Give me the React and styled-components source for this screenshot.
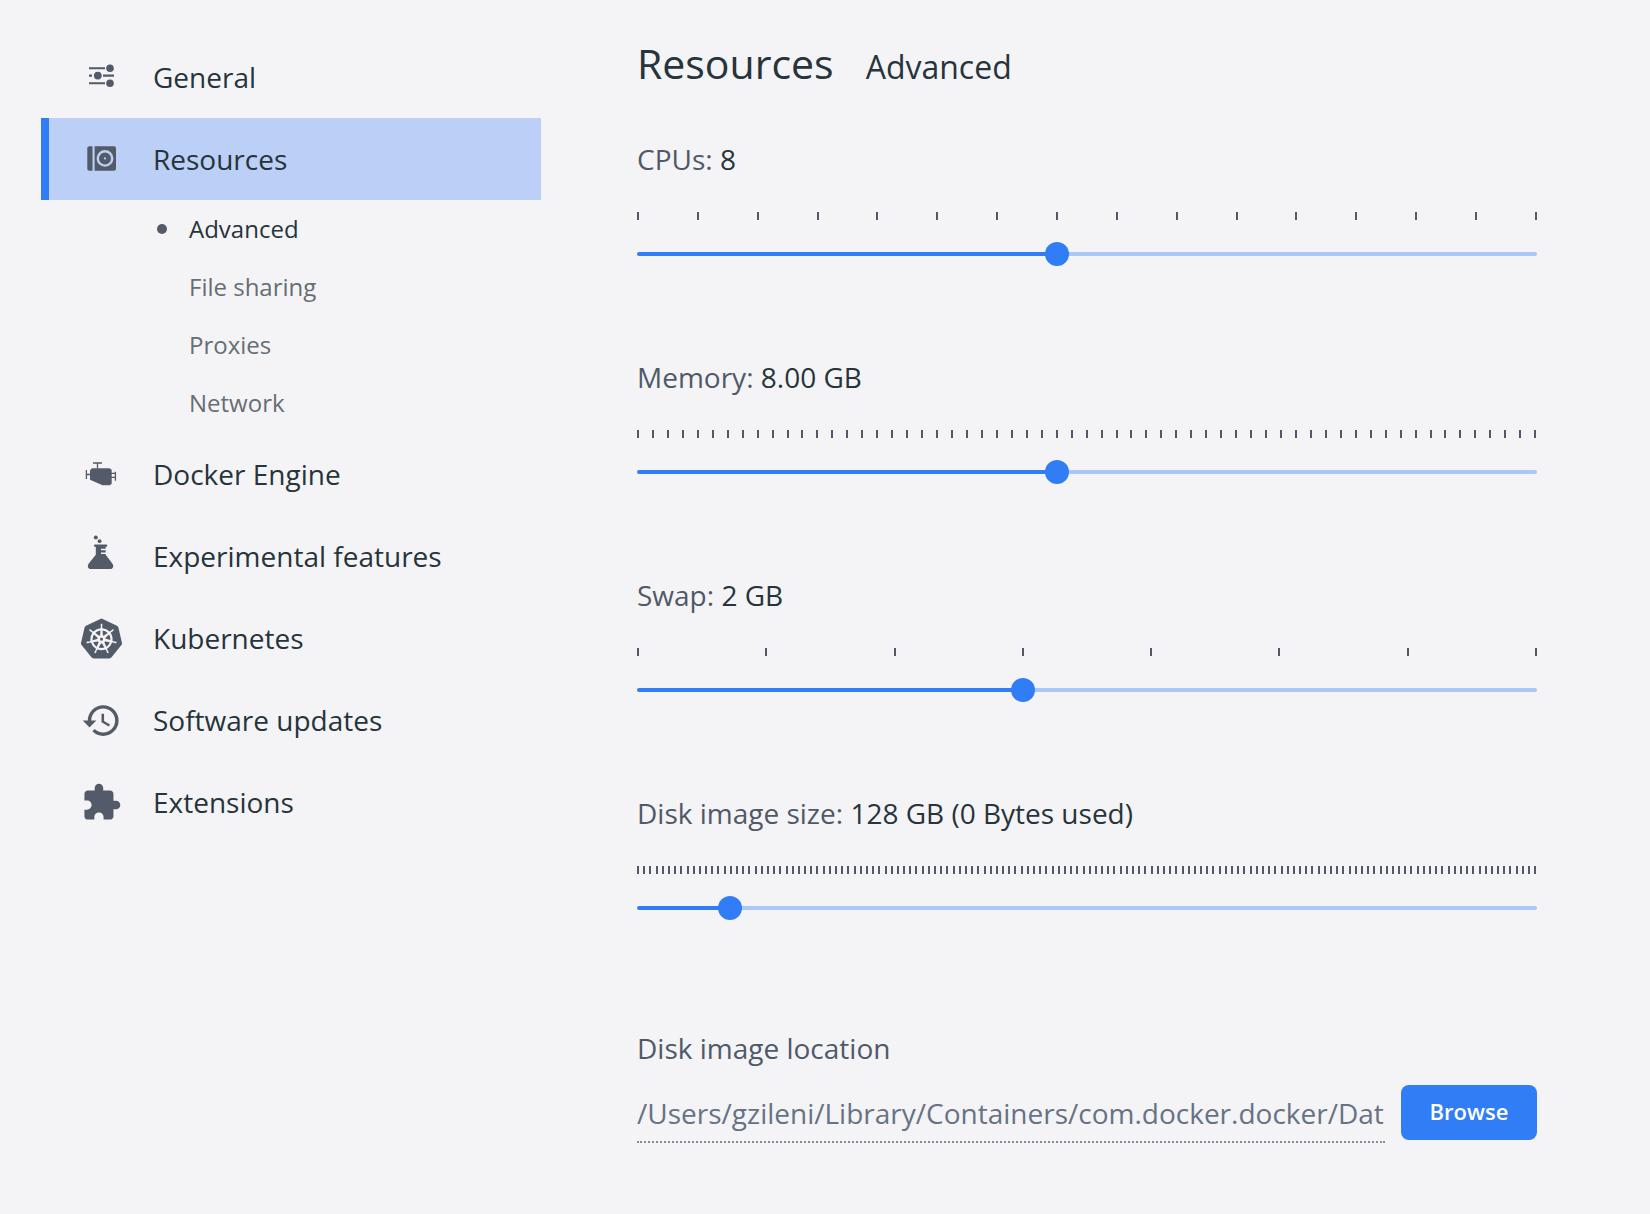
import React, { useState } from "react";
import styled, { createGlobalStyle } from "styled-components";
import { MdExtension, MdHistory } from "react-icons/md";
import { SiKubernetes } from "react-icons/si";

const color = {
  page: "#f4f4f6",
  text: "#27343b",
  label: "#505968",
  muted: "#666e73",
  path: "#677285",
  icon: "#535b69",
  blue: "#307df6",
  rail: "#a9c7f7",
  selected: "#bbcff7",
};

const GlobalStyle = createGlobalStyle`
  *, *::before, *::after { box-sizing: border-box; }
  body {
    margin: 0;
    background: ${color.page};
    color: ${color.text};
    font-family: "Open Sans", "Noto Sans", sans-serif;
    font-size: 28px;
    line-height: 40px;
  }
`;

const Page = styled.div`
  display: flex;
  align-items: flex-start;
  min-height: 100vh;
  padding: 36px 113px 72px 41px;
`;

const Sidebar = styled.nav`
  flex: 0 0 500px;
`;

const List = styled.ul`
  margin: 0;
  padding: 0;
  list-style: none;
`;

const NavLink = styled.a`
  display: flex;
  align-items: center;
  gap: 31px;
  height: 82px;
  padding-left: 32px;
  border-left: 8px solid ${(p) => (p.$active ? color.blue : "transparent")};
  background: ${(p) => (p.$active ? color.selected : "transparent")};
  color: ${color.text};
  text-decoration: none;
`;

const IconSlot = styled.span`
  display: flex;
  flex: 0 0 41px;
  color: ${color.icon};
`;

const SubList = styled(List)`
  padding: 0 0 1px 112px;
`;

const SubLink = styled.a`
  display: flex;
  align-items: center;
  gap: 22px;
  height: 58px;
  font-size: 24px;
  color: ${(p) => (p.$active ? color.text : color.muted)};
  text-decoration: none;

  &::before {
    content: "";
    width: 10px;
    height: 10px;
    margin-left: 4px;
    border-radius: 50%;
    background: ${(p) => (p.$active ? color.icon : "transparent")};
  }
`;

const Content = styled.main`
  flex: 1;
  min-width: 0;
  margin-left: 96px;
`;

const Heading = styled.header`
  display: flex;
  align-items: baseline;
  gap: 32px;
  margin-bottom: 49px;
`;

const Title = styled.h1`
  margin: 0;
  font-size: 41px;
  font-weight: 400;
  line-height: 54px;
`;

const Subtitle = styled.h2`
  margin: 0;
  font-size: 32px;
  font-weight: 400;
`;

const Setting = styled.section`
  padding-bottom: 101px;
`;

const Label = styled.label`
  display: block;
  color: ${color.label};
`;

const Value = styled.output`
  color: ${color.text};
`;

const Ticks = styled.div`
  display: flex;
  justify-content: space-between;
  margin: 33px 0 32px;
`;

const Tick = styled.span`
  width: 2px;
  height: 8px;
  background: ${color.label};
`;

const Rail = styled.div`
  display: flex;
  height: 4px;
  border-radius: 2px;
  background: linear-gradient(${color.blue}, ${color.blue}) no-repeat ${color.rail};
`;

const Range = styled.input`
  appearance: none;
  flex: 1;
  height: 24px;
  margin: -10px -12px;
  background: transparent;
  cursor: pointer;

  &::-webkit-slider-thumb {
    appearance: none;
    width: 24px;
    height: 24px;
    border: 0;
    border-radius: 50%;
    background: ${color.blue};
  }
`;

const Location = styled.section`
  padding-top: 17px;
`;

const LocationRow = styled.div`
  display: flex;
  align-items: flex-end;
  gap: 16px;
  margin-top: 17px;
`;

const PathInput = styled.input`
  flex: 1;
  min-width: 0;
  height: 58px;
  padding: 0;
  border: 0;
  border-bottom: 2px dotted #8c8c90;
  background: transparent;
  color: ${color.path};
  font: inherit;
  outline: 0;
`;

const Button = styled.button`
  min-width: 136px;
  height: 55px;
  margin-bottom: 3px;
  padding: 0 24px 3px;
  border: 0;
  border-radius: 8px;
  background: ${color.blue};
  color: #fff;
  font: inherit;
  font-size: 22px;
  font-weight: 600;
  line-height: 32px;
`;

const Glyph = ({ children }) => (
  <svg width="40" height="40" viewBox="0 0 40 40" fill="currentColor" overflow="visible" aria-hidden="true">
    {children}
  </svg>
);

const SlidersIcon = () => (
  <Glyph>
    <path d="M8 11.2h16M8 18.6h3M22 18.6h11M8 26.2h16" fill="none" stroke="currentColor" strokeWidth="2.1" />
    <circle cx="29" cy="11.2" r="3.8" />
    <circle cx="16.8" cy="18.6" r="3.9" />
    <circle cx="29" cy="26.2" r="3.8" />
  </Glyph>
);

const DriveIcon = () => (
  <Glyph>
    <path d="M8.3 7.3h3.2v24.4H8.3a2 2 0 0 1-2-2V9.3a2 2 0 0 1 2-2z" />
    <path
      fillRule="evenodd"
      d="M13.6 7.3h19.4a2 2 0 0 1 2 2v20.4a2 2 0 0 1-2 2H13.6zM24 11a8.4 8.4 0 1 0 0 16.8a8.4 8.4 0 1 0 0-16.8zM24 13.4a6 6 0 1 1 0 12a6 6 0 1 1 0-12zM24 18.3a1.1 1.1 0 1 0 0 2.2a1.1 1.1 0 1 0 0-2.2z"
    />
  </Glyph>
);

const EngineIcon = () => (
  <Glyph>
    <path d="M12 9h9M16.5 9v5.5M5.4 16v9M5.4 20.5H9M30 19.3h4.5M30 23.3h4.5M34.4 17.8v9" fill="none" stroke="currentColor" strokeWidth="1.3" />
    <path d="M11 14.2h17.500l2.200 1.500v13.600l-1.600 1.900H21.500L9 25.800V16.200z" />
  </Glyph>
);

const FlaskIcon = () => (
  <Glyph>
    <circle cx="14.800" cy="1.400" r="2" />
    <circle cx="18.600" cy="5.200" r="1.900" />
    <path d="M14 8.600h11.200a1 1 0 0 1 0 2.200H24.700v1.900h-4.700v1.500h4.700v2.200h-4.700v1.500h4.700v.9l6.600 8.600c2 3 .6 5.600-2.200 5.600H10c-2.800 0-4.200-2.600-2.200-5.600l7-8.600v-8H14a1 1 0 0 1 0-2.200z" />
  </Glyph>
);

const sections = [
  { name: "General", icon: <SlidersIcon /> },
  {
    name: "Resources",
    icon: <DriveIcon />,
    active: true,
    pages: ["Advanced", "File sharing", "Proxies", "Network"],
  },
  { name: "Docker Engine", icon: <EngineIcon /> },
  { name: "Experimental features", icon: <FlaskIcon /> },
  { name: "Kubernetes", icon: <SiKubernetes size={41} aria-hidden="true" /> },
  { name: "Software updates", icon: <MdHistory size={41} aria-hidden="true" /> },
  { name: "Extensions", icon: <MdExtension size={41} aria-hidden="true" /> },
];

const settings = [
  { id: "cpus", name: "CPUs", min: 1, max: 16, step: 1, initial: 8, format: (v) => `${v}` },
  { id: "memory", name: "Memory", min: 1, max: 16, step: 0.25, initial: 8, format: (v) => `${v.toFixed(2)} GB` },
  { id: "swap", name: "Swap", min: 0.5, max: 4, step: 0.5, initial: 2, format: (v) => `${v} GB` },
  { id: "disk", name: "Disk image size", min: 8, max: 1168, step: 8, initial: 128, format: (v) => `${v} GB (0 Bytes used)` },
];

function SliderSetting({ id, name, min, max, step, initial, format }) {
  const [value, setValue] = useState(initial);
  const tickCount = Math.round((max - min) / step) + 1;
  const filled = ((value - min) / (max - min)) * 100;
  return (
    <Setting>
      <Label htmlFor={id}>
        {name}: <Value htmlFor={id}>{format(value)}</Value>
      </Label>
      <Ticks aria-hidden="true">
        {Array.from({ length: tickCount }, (_, i) => (
          <Tick key={i} />
        ))}
      </Ticks>
      <Rail style={{ backgroundSize: `${filled}% 100%` }}>
        <Range
          id={id}
          type="range"
          min={min}
          max={max}
          step={step}
          value={value}
          onChange={(e) => setValue(Number(e.target.value))}
        />
      </Rail>
    </Setting>
  );
}

export default function App() {
  return (
    <>
      <GlobalStyle />
      <Page>
        <Sidebar aria-label="Settings">
          <List>
            {sections.map(({ name, icon, active, pages }) => (
              <li key={name}>
                <NavLink href="#" $active={active}>
                  <IconSlot>{icon}</IconSlot>
                  {name}
                </NavLink>
                {pages && (
                  <SubList>
                    {pages.map((page, i) => (
                      <li key={page}>
                        <SubLink href="#" $active={i === 0} aria-current={i === 0 ? "page" : undefined}>
                          {page}
                        </SubLink>
                      </li>
                    ))}
                  </SubList>
                )}
              </li>
            ))}
          </List>
        </Sidebar>
        <Content>
          <Heading>
            <Title>Resources</Title>
            <Subtitle>Advanced</Subtitle>
          </Heading>
          {settings.map((setting) => (
            <SliderSetting key={setting.id} {...setting} />
          ))}
          <Location>
            <Label htmlFor="location">Disk image location</Label>
            <LocationRow>
              <PathInput
                id="location"
                type="text"
                readOnly
                value="/Users/gzileni/Library/Containers/com.docker.docker/Dat"
              />
              <Button type="button">Browse</Button>
            </LocationRow>
          </Location>
        </Content>
      </Page>
    </>
  );
}
